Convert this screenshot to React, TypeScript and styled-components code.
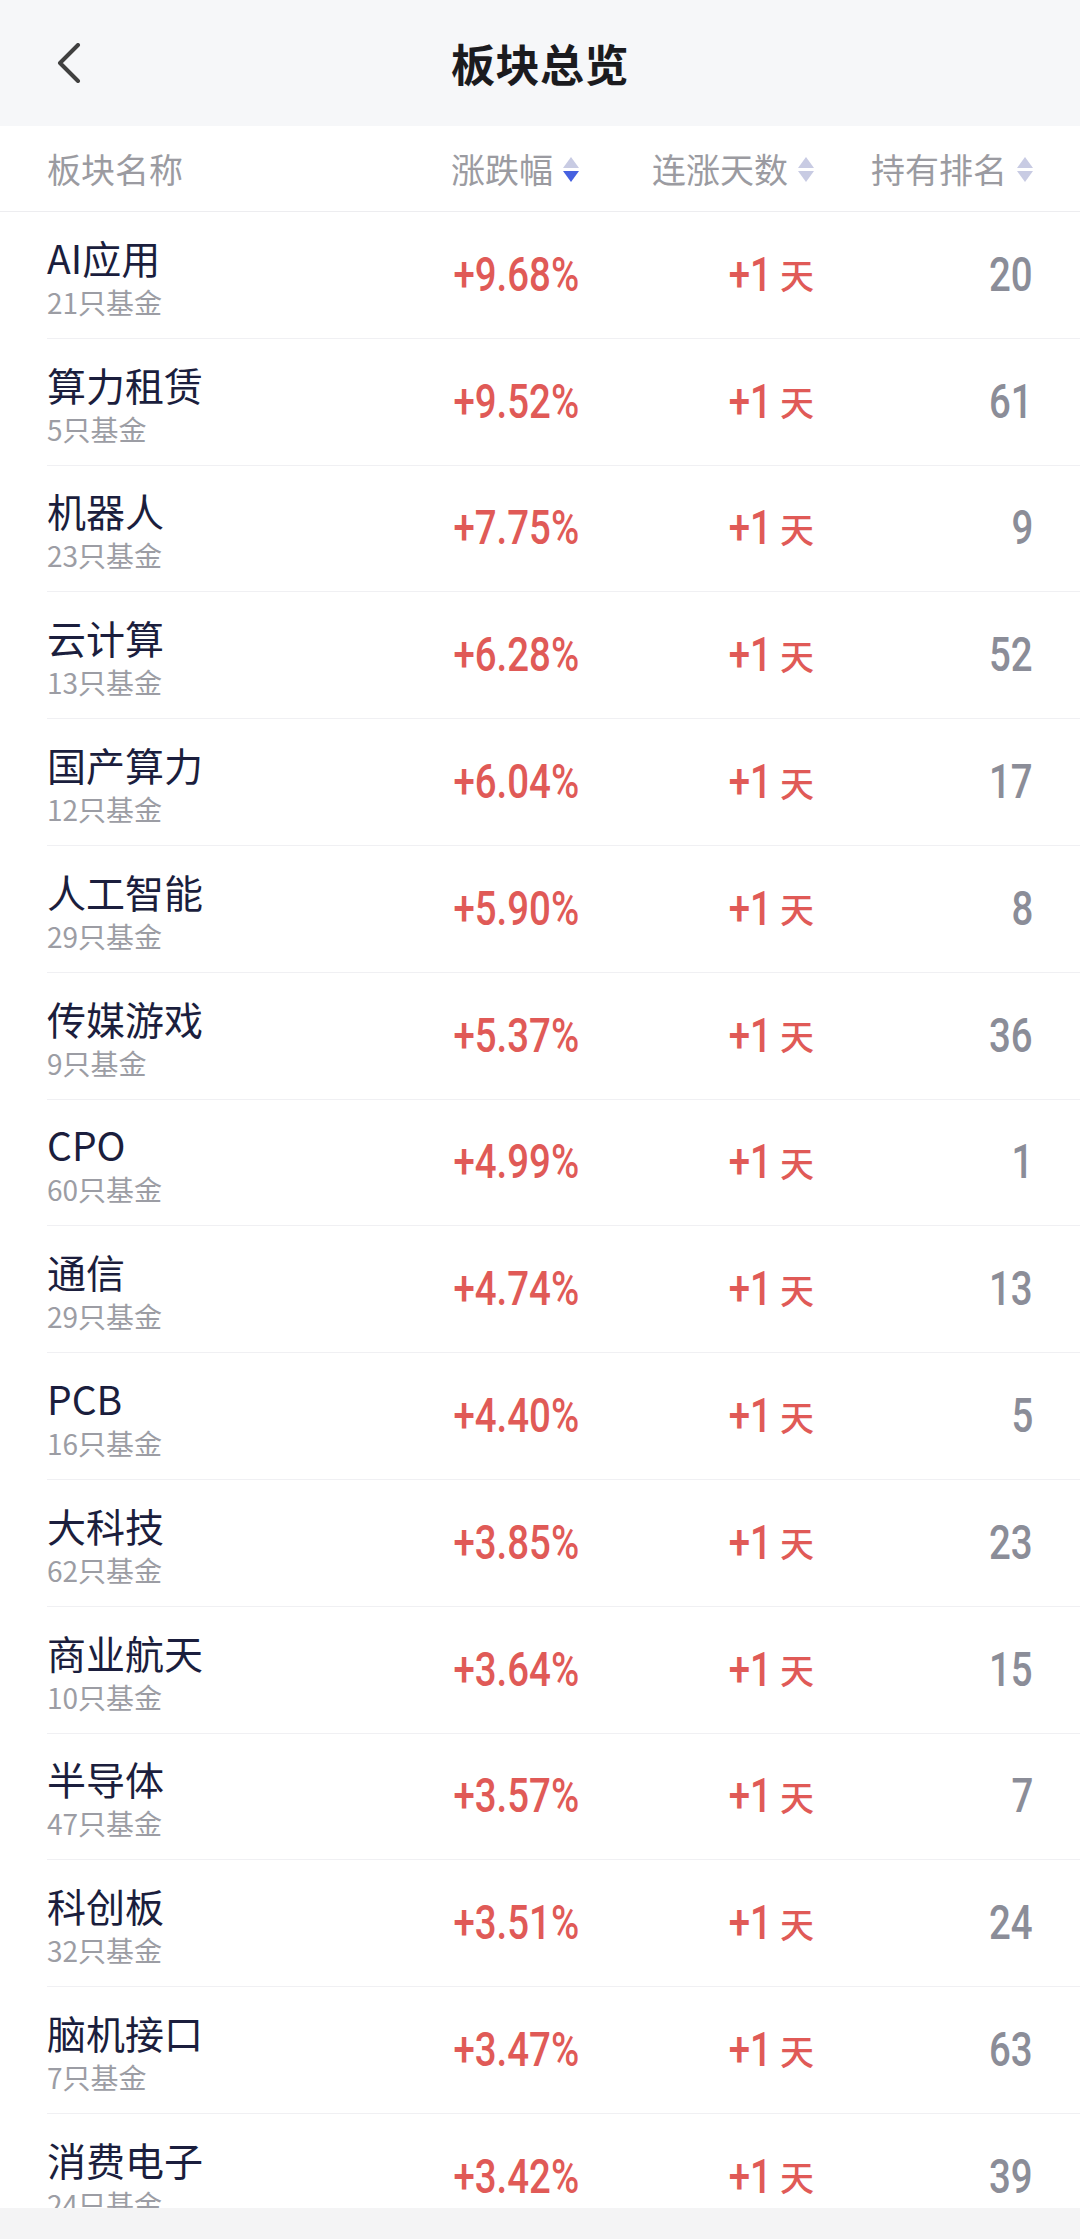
import React from 'react';
import styled, { createGlobalStyle } from 'styled-components';

//----SECTOR-OVERVIEW---DATA----//
const sectors = [
  { name: 'AI应用', funds: 21, change: '+9.68%', days: '+1', rank: 20 },
  { name: '算力租赁', funds: 5, change: '+9.52%', days: '+1', rank: 61 },
  { name: '机器人', funds: 23, change: '+7.75%', days: '+1', rank: 9 },
  { name: '云计算', funds: 13, change: '+6.28%', days: '+1', rank: 52 },
  { name: '国产算力', funds: 12, change: '+6.04%', days: '+1', rank: 17 },
  { name: '人工智能', funds: 29, change: '+5.90%', days: '+1', rank: 8 },
  { name: '传媒游戏', funds: 9, change: '+5.37%', days: '+1', rank: 36 },
  { name: 'CPO', funds: 60, change: '+4.99%', days: '+1', rank: 1 },
  { name: '通信', funds: 29, change: '+4.74%', days: '+1', rank: 13 },
  { name: 'PCB', funds: 16, change: '+4.40%', days: '+1', rank: 5 },
  { name: '大科技', funds: 62, change: '+3.85%', days: '+1', rank: 23 },
  { name: '商业航天', funds: 10, change: '+3.64%', days: '+1', rank: 15 },
  { name: '半导体', funds: 47, change: '+3.57%', days: '+1', rank: 7 },
  { name: '科创板', funds: 32, change: '+3.51%', days: '+1', rank: 24 },
  { name: '脑机接口', funds: 7, change: '+3.47%', days: '+1', rank: 63 },
  { name: '消费电子', funds: 24, change: '+3.42%', days: '+1', rank: 39 },
];

const NUM_FONT = `Roboto, "Noto Sans", sans-serif`;
const CJK_FONT = `"Noto Sans CJK SC", "Noto Sans", sans-serif`;
const RED = '#e05a57';

const GlobalStyle = createGlobalStyle`
  html, body {
    margin: 0;
    padding: 0;
    background: #ffffff;
    font-family: ${CJK_FONT};
  }
  * { box-sizing: border-box; }
`;

const SortIcon: React.FC<{ active?: boolean }> = ({ active }) => (
  <StyledSort>
    <Triangle dir="up" />
    <Triangle dir="down" active={active} />
  </StyledSort>
);

const App: React.FC = () => {
  return (
    <>
      <GlobalStyle />
      <Page>
        <TopBar>
          <BackButton>
            <svg width="26" height="40" viewBox="0 0 26 40">
              <path d="M22 2 L4 20 L22 38" fill="none" stroke="#404040" strokeWidth="4" strokeLinecap="round" strokeLinejoin="round" />
            </svg>
          </BackButton>
          <Title>板块总览</Title>
          <span />
        </TopBar>

        <HeaderRow>
          <HeadCell align="left">板块名称</HeadCell>
          <HeadCell>
            涨跌幅
            <SortIcon active />
          </HeadCell>
          <HeadCell>
            连涨天数
            <SortIcon />
          </HeadCell>
          <HeadCell>
            持有排名
            <SortIcon />
          </HeadCell>
        </HeaderRow>

        <List>
          {sectors.map((s) => (
            <Row key={s.name}>
              <NameCell>
                <SectorName>{s.name}</SectorName>
                <FundCount>{s.funds}只基金</FundCount>
              </NameCell>
              <ValueCell color={RED}>
                <Digits>{s.change}</Digits>
              </ValueCell>
              <ValueCell color={RED}>
                <Digits>{s.days}</Digits>
                <DayUnit>天</DayUnit>
              </ValueCell>
              <ValueCell color="#8b8d98">
                <Digits>{s.rank}</Digits>
              </ValueCell>
            </Row>
          ))}
        </List>

        <Footer />
      </Page>
    </>
  );
};

const Page = styled.div`
  width: 1080px;
  height: 2239px;
  display: flex;
  flex-direction: column;
  overflow: hidden;
  background: #ffffff;
`;

const TopBar = styled.div`
  height: 126px;
  flex-shrink: 0;
  background: #f6f7f9;
  display: grid;
  grid-template-columns: 1fr auto 1fr;
  align-items: center;
`;

const BackButton = styled.div`
  display: flex;
  align-items: center;
  padding-left: 56px;
  height: 100%;
`;

const Title = styled.div`
  font-size: 44px;
  font-weight: 700;
  color: #1b1b1f;
  letter-spacing: 0.5px;
`;

const columns = `1fr 179px 235px 219px`;

const HeaderRow = styled.div`
  height: 86px;
  flex-shrink: 0;
  display: grid;
  grid-template-columns: ${columns};
  align-items: center;
  padding: 0 47px;
  border-bottom: 1px solid #ededf0;
`;

const HeadCell = styled.div<{ align?: 'left' | 'right' }>`
  display: flex;
  align-items: center;
  justify-content: ${(p) => (p.align === 'left' ? 'flex-start' : 'flex-end')};
  gap: 10px;
  font-size: 34px;
  color: #9b9ba1;
`;

const StyledSort = styled.div`
  display: flex;
  flex-direction: column;
  align-items: center;
  gap: 3px;
  margin-top: 2px;
`;

const Triangle = styled.span<{ dir: 'up' | 'down'; active?: boolean }>`
  width: 0;
  height: 0;
  border-left: 8px solid transparent;
  border-right: 8px solid transparent;
  ${(p) =>
    p.dir === 'up'
      ? `border-bottom: 11px solid #c8cbe3;`
      : `border-top: 11px solid ${p.active ? '#4661e0' : '#c8cbe3'};`}
`;

const List = styled.div`
  flex: 1;
  overflow: hidden;
`;

const Row = styled.div`
  height: 126.8px;
  margin-left: 47px;
  padding-right: 47px;
  display: grid;
  grid-template-columns: ${columns};
  align-items: center;
  border-bottom: 1px solid #f0f0f3;
`;

const NameCell = styled.div`
  display: flex;
  flex-direction: column;
`;

const SectorName = styled.div`
  font-size: 39px;
  line-height: 55px;
  color: #1b1e3d;
`;

const FundCount = styled.div`
  font-size: 28px;
  line-height: 35px;
  color: #9c9da4;
`;

const ValueCell = styled.div<{ color: string }>`
  display: flex;
  align-items: center;
  justify-content: flex-end;
  color: ${(p) => p.color};
`;

// condensed look of the app's number font
const Digits = styled.span`
  display: inline-block;
  font-family: ${NUM_FONT};
  font-size: 48px;
  font-weight: 500;
  line-height: 56px;
  transform: scaleX(0.8);
  transform-origin: right center;
`;

const DayUnit = styled.span`
  font-family: ${CJK_FONT};
  font-size: 34px;
  font-weight: 500;
  margin-left: 8px;
`;

const Footer = styled.div`
  height: 31px;
  flex-shrink: 0;
  background: #f4f4f5;
`;

export default App;
